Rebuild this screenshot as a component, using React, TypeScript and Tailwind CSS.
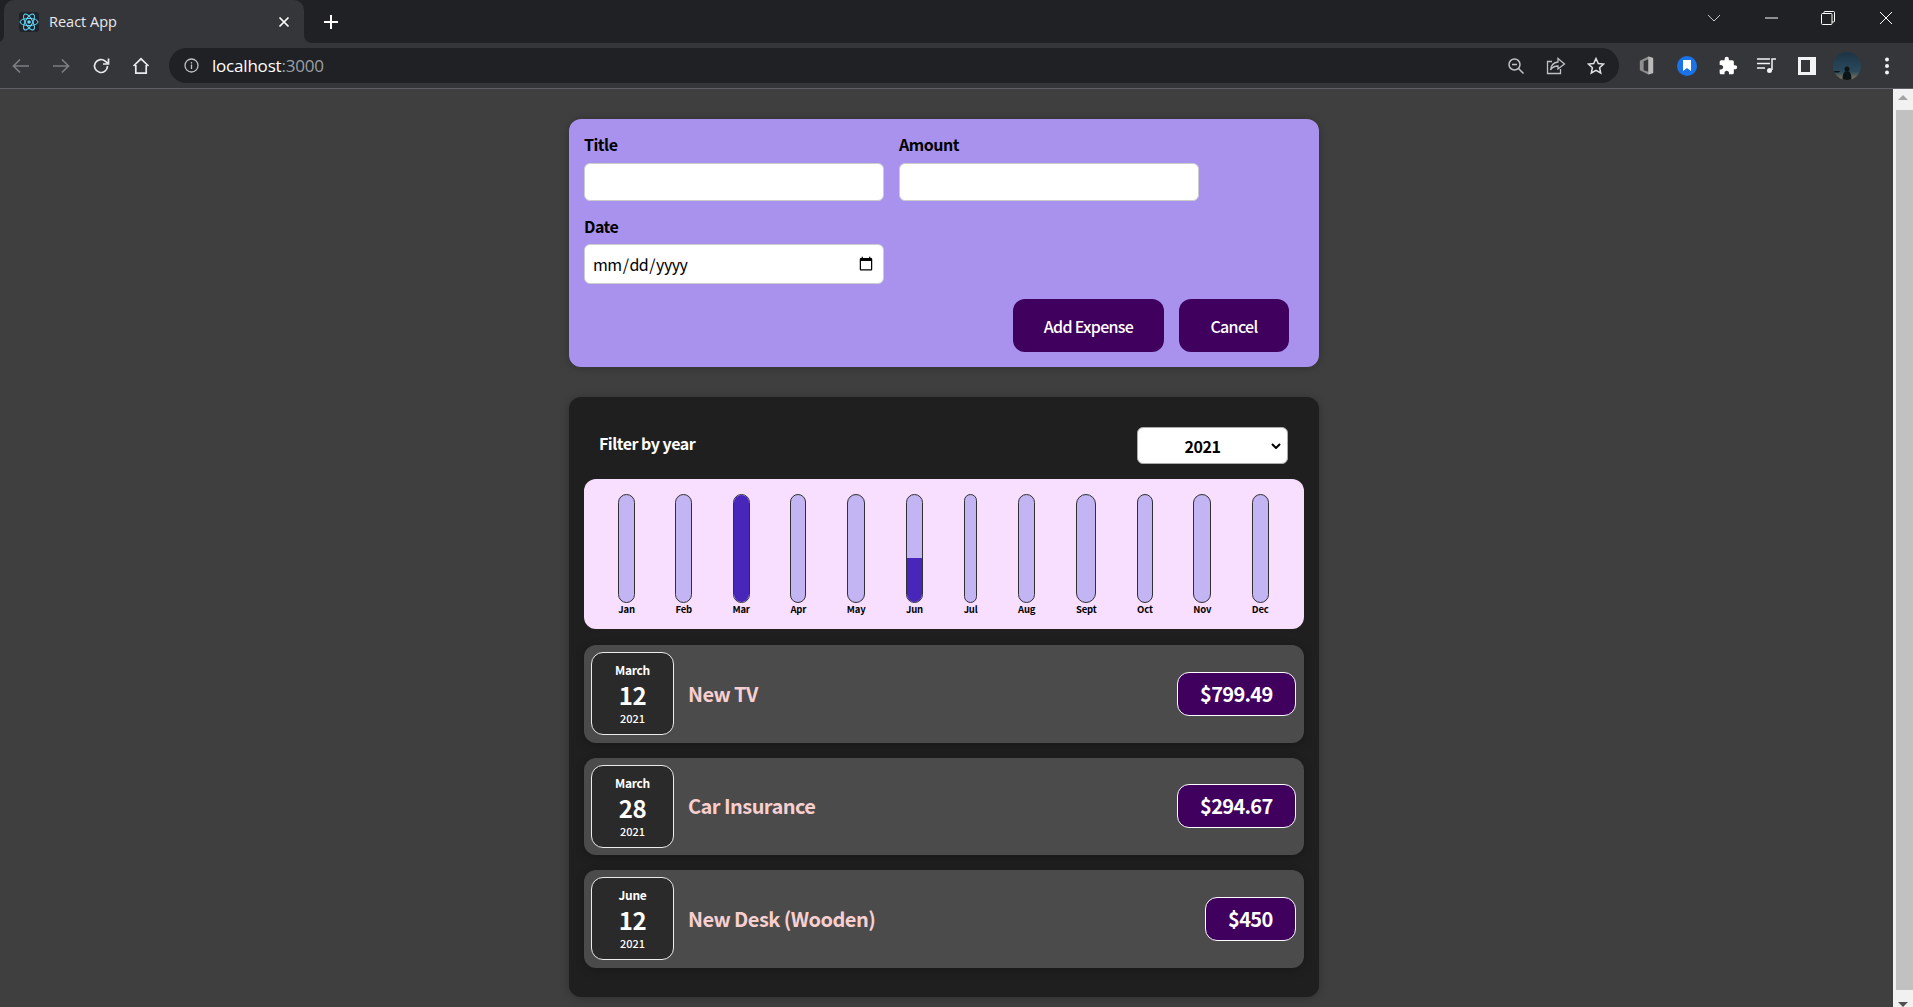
interface Expense {
  month: string;
  day: string;
  title: string;
  amount: string;
}

const expenses: Expense[] = [
  { month: "March", day: "12", title: "New TV", amount: "$799.49" },
  { month: "March", day: "28", title: "Car Insurance", amount: "$294.67" },
  { month: "June", day: "12", title: "New Desk (Wooden)", amount: "$450" },
];

const months = [
  { label: "Jan", fill: 0 },
  { label: "Feb", fill: 0 },
  { label: "Mar", fill: 100 },
  { label: "Apr", fill: 0 },
  { label: "May", fill: 0 },
  { label: "Jun", fill: 41 },
  { label: "Jul", fill: 0 },
  { label: "Aug", fill: 0 },
  { label: "Sept", fill: 0 },
  { label: "Oct", fill: 0 },
  { label: "Nov", fill: 0 },
  { label: "Dec", fill: 0 },
];

const ReactLogo = () => (
  <svg width="20" height="20" viewBox="0 0 20 20" className="rounded-[3px] bg-[#20232a]">
    <g fill="none" stroke="#61dafb" strokeWidth="1">
      <ellipse cx="10" cy="10" rx="9" ry="3.6" />
      <ellipse cx="10" cy="10" rx="9" ry="3.6" transform="rotate(60 10 10)" />
      <ellipse cx="10" cy="10" rx="9" ry="3.6" transform="rotate(120 10 10)" />
    </g>
    <circle cx="10" cy="10" r="1.8" fill="#61dafb" />
  </svg>
);

const TabCorner = ({ flip }: { flip?: boolean }) => (
  <svg width="8" height="8" viewBox="0 0 8 8" className={flip ? "absolute bottom-0 right-[-8px] scale-x-[-1]" : "absolute bottom-0 left-[-8px]"}>
    <path d="M8 0V8H0C4.4 8 8 4.4 8 0Z" fill="#35363a" />
  </svg>
);

const ChromeTopBar = () => (
  <div className="flex h-[43px] items-end bg-[#202124] pl-[4px]">
    <div className="relative flex h-[43px] w-[300px] items-center rounded-t-[10px] bg-[#35363a] pl-[15px] pr-[14px]">
      <TabCorner />
      <TabCorner flip />
      <ReactLogo />
      <span className="ml-[10px] flex-1 font-['Open_Sans',sans-serif] text-[14.5px] text-[#e8eaed]">React App</span>
      <svg width="12" height="12" viewBox="0 0 12 12" stroke="#fff" strokeWidth="1.7" fill="none">
        <path d="M1.5 1.5l9 9M10.5 1.5l-9 9" />
      </svg>
    </div>
    <div className="flex h-[43px] w-[54px] items-center justify-center">
      <svg width="16" height="16" viewBox="0 0 16 16" stroke="#fff" strokeWidth="2" fill="none">
        <path d="M8 1v14M1 8h14" />
      </svg>
    </div>
    <div className="flex-1" />
    <div className="flex h-[36px] items-center self-start pr-[5px]">
      <svg width="14" height="8" viewBox="0 0 14 8" fill="none" stroke="#c4c7c5" strokeWidth="1" className="mr-[44px]">
        <path d="M1 1l6 6 6-6" />
      </svg>
      <svg width="13" height="2" viewBox="0 0 13 2" className="mr-[43px]">
        <path d="M0 1h13" stroke="#fff" strokeWidth="1" />
      </svg>
      <svg width="14" height="14" viewBox="0 0 14 14" fill="none" stroke="#fff" strokeWidth="1" className="mr-[44px]">
        <rect x="0.5" y="2.5" width="10.5" height="11" rx="1" />
        <path d="M3 2.5V1.500a1 1 0 0 1 1-1h8.500a1 1 0 0 1 1 1V10a1 1 0 0 1-1 1H11" />
      </svg>
      <svg width="14" height="14" viewBox="0 0 14 14" fill="none" stroke="#fff" strokeWidth="1" className="mr-[15px]">
        <path d="M1 1l12 12M13 1L1 13" />
      </svg>
    </div>
  </div>
);

const ToolbarIcons = () => (
  <div className="flex items-center">
    <svg width="18" height="18" viewBox="0 0 18 18" fill="none" stroke="#bdc1c6" strokeWidth="1.5" className="mr-[21px]">
      <circle cx="7.500" cy="7.500" r="5.500" />
      <path d="M5 7.500h5M11.500 11.500l5 5" />
    </svg>
    <svg width="20" height="18" viewBox="0 0 20 18" fill="none" stroke="#bdc1c6" strokeWidth="1.300" className="mr-[21px]">
      <path d="M6 4.500H1.500v12h13V12" />
      <path d="M12 1.500l6.500 5.500-6.500 5V9c-4 0-6 1.500-7.500 4 .5-4.500 3-7.500 7.500-8z" />
    </svg>
    <svg width="18" height="18" viewBox="0 0 18 18" fill="none" stroke="#dfe1e5" strokeWidth="1.500" className="mr-[33px]">
      <path d="M9 1.500l2.300 5 5.200.6-3.900 3.600 1.100 5.300L9 13.300 4.300 16l1.100-5.300L1.500 7.100l5.200-.6z" />
    </svg>
    <svg width="17" height="19" viewBox="0 0 16 20" className="mr-[22px]">
      <path d="M1 5l9-4.500 5 1.500v16l-5 1.500L1 15z" fill="#8f8f8f" />
      <path d="M5 5.500l5-2v13l-5-1.500z" fill="#35363a" />
      <path d="M10 .5l5 1.500v16l-5 1.500z" fill="#b9b9b9" />
    </svg>
    <div className="mr-[21px] flex h-[20px] w-[20px] items-center justify-center rounded-full bg-[#1a73e8]">
      <svg width="8" height="11" viewBox="0 0 8 11">
        <path d="M0 0h8v11L4 8l-4 3z" fill="#fff" />
      </svg>
    </div>
    <svg width="20" height="20" viewBox="0 0 24 24" fill="#fff" className="mr-[19px]">
      <path d="M20.500 11H19V7c0-1.100-.9-2-2-2h-4V3.500C13 2.120 11.880 1 10.500 1S8 2.120 8 3.500V5H4c-1.100 0-1.990.9-1.990 2v3.800H3.500c1.490 0 2.700 1.210 2.700 2.700s-1.210 2.700-2.700 2.700H2V20c0 1.100.9 2 2 2h3.800v-1.500c0-1.490 1.210-2.700 2.700-2.700 1.490 0 2.700 1.210 2.700 2.700V22H17c1.100 0 2-.9 2-2v-4h1.500c1.380 0 2.500-1.120 2.500-2.500S21.880 11 20.500 11z" />
    </svg>
    <svg width="20" height="17" viewBox="0 0 20 17" fill="none" stroke="#f1f3f4" className="mr-[21px]">
      <path d="M0 2h13M0 6.500h13M0 11h8" strokeWidth="1.500" />
      <path d="M15 13V2h4" strokeWidth="1.500" />
      <circle cx="12.500" cy="13.500" r="2.500" fill="#f1f3f4" stroke="none" />
    </svg>
    <svg width="18" height="18" viewBox="0 0 18 18" className="mr-[17px]">
      <rect width="18" height="18" fill="#f1f3f4" />
      <rect x="3" y="3" width="9" height="12" fill="#35363a" />
    </svg>
    <svg width="28" height="28" viewBox="0 0 28 28" className="mr-[23px]">
      <defs>
        <linearGradient id="sky" x1="0" y1="0" x2="0" y2="1">
          <stop offset="0" stopColor="#1c3445" />
          <stop offset="0.7" stopColor="#2b4a5c" />
          <stop offset="1" stopColor="#8a7a5a" />
        </linearGradient>
        <clipPath id="ring">
          <circle cx="14" cy="14" r="14" />
        </clipPath>
      </defs>
      <g clipPath="url(#ring)">
        <rect width="28" height="28" fill="url(#sky)" />
        <circle cx="14" cy="17" r="2.500" fill="#0d1418" />
        <path d="M9.500 28c0-6 1.500-9 4.500-9s4.500 3 4.500 9z" fill="#0d1418" />
        <path d="M0 19h7l-1 1.500H0z" fill="#0d1418" />
      </g>
    </svg>
    <svg width="6" height="18" viewBox="0 0 6 18" fill="#f1f3f4">
      <circle cx="3" cy="2.500" r="2" />
      <circle cx="3" cy="9" r="2" />
      <circle cx="3" cy="15.500" r="2" />
    </svg>
  </div>
);

const ChromeToolbar = () => (
  <div className="box-content flex h-[45px] items-center border-b border-[#5f6063] bg-[#35363a] pl-[12px]">
    <svg width="18" height="16" viewBox="0 0 18 16" fill="none" stroke="#7c7e82" strokeWidth="1.700" className="mr-[22px]">
      <path d="M17 8H2M8 1.500L1.500 8 8 14.500" />
    </svg>
    <svg width="18" height="16" viewBox="0 0 18 16" fill="none" stroke="#7c7e82" strokeWidth="1.700" className="mr-[22px]">
      <path d="M1 8h15M10 1.500L16.500 8 10 14.500" />
    </svg>
    <svg width="18" height="18" viewBox="0 0 18 18" fill="none" stroke="#e8eaed" strokeWidth="1.700" className="mr-[22px]">
      <path d="M15.500 9a6.500 6.500 0 1 1-2-4.700L16 6.500" />
      <path d="M16.500 1.500v5.500h-5.500" fill="none" />
    </svg>
    <svg width="18" height="18" viewBox="0 0 18 18" fill="none" stroke="#e8eaed" strokeWidth="1.700" className="mr-[19px]">
      <path d="M1.500 9L9 1.800 16.500 9M3.800 8v8.200h10.400V8" />
    </svg>
    <div className="flex h-[35px] w-[1450px] items-center justify-between rounded-full bg-[#202124] pl-[15px] pr-[14px]">
      <div className="flex items-center">
        <svg width="15" height="15" viewBox="0 0 15 15" fill="none" stroke="#bdc1c6" strokeWidth="1.300" className="mr-[13px]">
          <circle cx="7.500" cy="7.500" r="6.500" />
          <path d="M7.500 6.500v4.500M7.500 4v1.500" />
        </svg>
        <span className="font-['Open_Sans',sans-serif] text-[17px] tracking-[-0.2px] text-white">
          localhost<span className="text-[#9aa0a6]">:3000</span>
        </span>
      </div>
    </div>
    <div className="ml-[-112px]">
      <ToolbarIcons />
    </div>
  </div>
);

const ExpenseForm = () => (
  <form className="rounded-[12px] bg-[#a892ee] pb-[15px] pl-[15px] pr-[30px] pt-[13px] shadow-[0_1px_8px_rgba(0,0,0,0.25)]">
    <div className="flex gap-[15px]">
      <div>
        <label className="mb-[7px] block text-[16px] font-bold leading-[24px] tracking-[-0.5px] text-black">Title</label>
        <input type="text" className="h-[38px] w-[300px] rounded-[6px] border border-[#ccc] bg-white px-[8px]" />
      </div>
      <div>
        <label className="mb-[7px] block text-[16px] font-bold leading-[24px] tracking-[-0.5px] text-black">Amount</label>
        <input type="number" className="h-[38px] w-[300px] rounded-[6px] border border-[#ccc] bg-white px-[8px]" />
      </div>
    </div>
    <div className="mt-[13px]">
      <label className="mb-[6px] block text-[16px] font-bold leading-[24px] tracking-[-0.5px] text-black">Date</label>
      <input
        type="date"
        className="h-[40px] w-[300px] rounded-[6px] border border-[#ccc] bg-white px-[7px] text-[16px] tracking-[-0.5px] text-black [color-scheme:light]"
      />
    </div>
    <div className="mt-[15px] flex justify-end gap-[15px]">
      <button type="button" className="h-[53px] w-[151px] rounded-[12px] bg-[#40005d] text-[16px] font-medium tracking-[-0.7px] text-white">
        Add Expense
      </button>
      <button type="button" className="h-[53px] w-[110px] rounded-[12px] bg-[#40005d] text-[16px] font-medium tracking-[-0.7px] text-white">
        Cancel
      </button>
    </div>
  </form>
);

const Chart = () => (
  <div className="mb-[1px] flex h-[150px] justify-around rounded-[12px] bg-[#f8dfff] pb-[15px] pl-[14px] pr-[15px] pt-[15px]">
    {months.map((m) => (
      <div key={m.label} className="flex h-full flex-col items-center">
        <div className="flex min-h-0 w-full flex-1 flex-col justify-end overflow-hidden rounded-[12px] border border-[#313131] bg-[#c3b4f3]">
          <div className="w-full bg-[#4826b9]" style={{ height: `${m.fill}%` }} />
        </div>
        <div className="mt-[1px] text-[9.500px] font-bold leading-[10px] tracking-[-0.2px] text-black">{m.label}</div>
      </div>
    ))}
  </div>
);

const ExpenseItem = ({ item }: { item: Expense }) => (
  <div className="flex h-[97.500px] items-center rounded-[12px] bg-[#4b4b4b] pl-[7px] pr-[8px] shadow-[0_2px_8px_rgba(0,0,0,0.25)]">
    <div className="flex h-[83px] w-[83px] flex-col items-center rounded-[12px] border border-[#ececec] bg-[#2a2a2a] text-white">
      <div className="mt-[8px] text-[12px] font-bold leading-[18px] tracking-[-0.3px]">{item.month}</div>
      <div className="text-[24px] font-bold leading-[32px] tracking-[-0.5px]">{item.day}</div>
      <div className="text-[11px] font-medium leading-[15px]">2021</div>
    </div>
    <h2 className="ml-[14px] flex-1 text-[20px] font-bold tracking-[-0.55px] text-[#f8cfcf]">{item.title}</h2>
    <div className="flex h-[44px] items-center rounded-[12px] border border-white bg-[#40005d] px-[22.500px] text-[20px] font-bold tracking-[-0.7px] text-white">
      {item.amount}
    </div>
  </div>
);

export default function App() {
  return (
    <div className="flex h-screen flex-col overflow-hidden bg-[#3f3f3f] font-['Noto_Sans_CJK_JP','Noto_Sans',sans-serif]">
      <ChromeTopBar />
      <ChromeToolbar />
      <div className="flex min-h-0 flex-1">
        <main className="flex min-w-0 flex-1 flex-col items-center pr-[5px] pt-[30px]">
          <div className="w-[750px]">
            <ExpenseForm />
            <section className="mt-[30px] flex flex-col gap-[15px] rounded-[12px] bg-[#1f1f1f] px-[15px] pb-[29px] pt-[30px] shadow-[0_1px_8px_rgba(0,0,0,0.25)]">
              <div className="flex items-center justify-between pl-[15px] pr-[16px]">
                <label className="pb-[5px] text-[16px] font-bold tracking-[-0.5px] text-white">Filter by year</label>
                <div className="relative">
                  <select className="h-[37px] w-[151px] appearance-none rounded-[6px] border border-[#aaa] bg-white pr-[20px] text-center text-[16px] font-bold tracking-[-0.5px] text-black">
                    <option>2021</option>
                  </select>
                  <svg width="10" height="6" viewBox="0 0 10 6" fill="none" stroke="#000" strokeWidth="2" className="pointer-events-none absolute right-[7px] top-[16px]">
                    <path d="M1 1l4 4 4-4" />
                  </svg>
                </div>
              </div>
              <Chart />
              {expenses.map((item) => (
                <ExpenseItem key={item.title} item={item} />
              ))}
            </section>
          </div>
        </main>
        <div className="flex w-[20px] flex-col items-center bg-[#f1f1f1] pt-[6px]">
          <div className="h-0 w-0 border-x-[5px] border-b-[5px] border-x-transparent border-b-[#a3a3a3]" />
          <div className="ml-[2px] mt-[10px] h-[884px] w-[17px] bg-[#c1c1c1]" />
          <div className="mt-[12px] h-0 w-0 border-x-[5px] border-t-[5px] border-x-transparent border-t-[#505050]" />
        </div>
      </div>
    </div>
  );
}
